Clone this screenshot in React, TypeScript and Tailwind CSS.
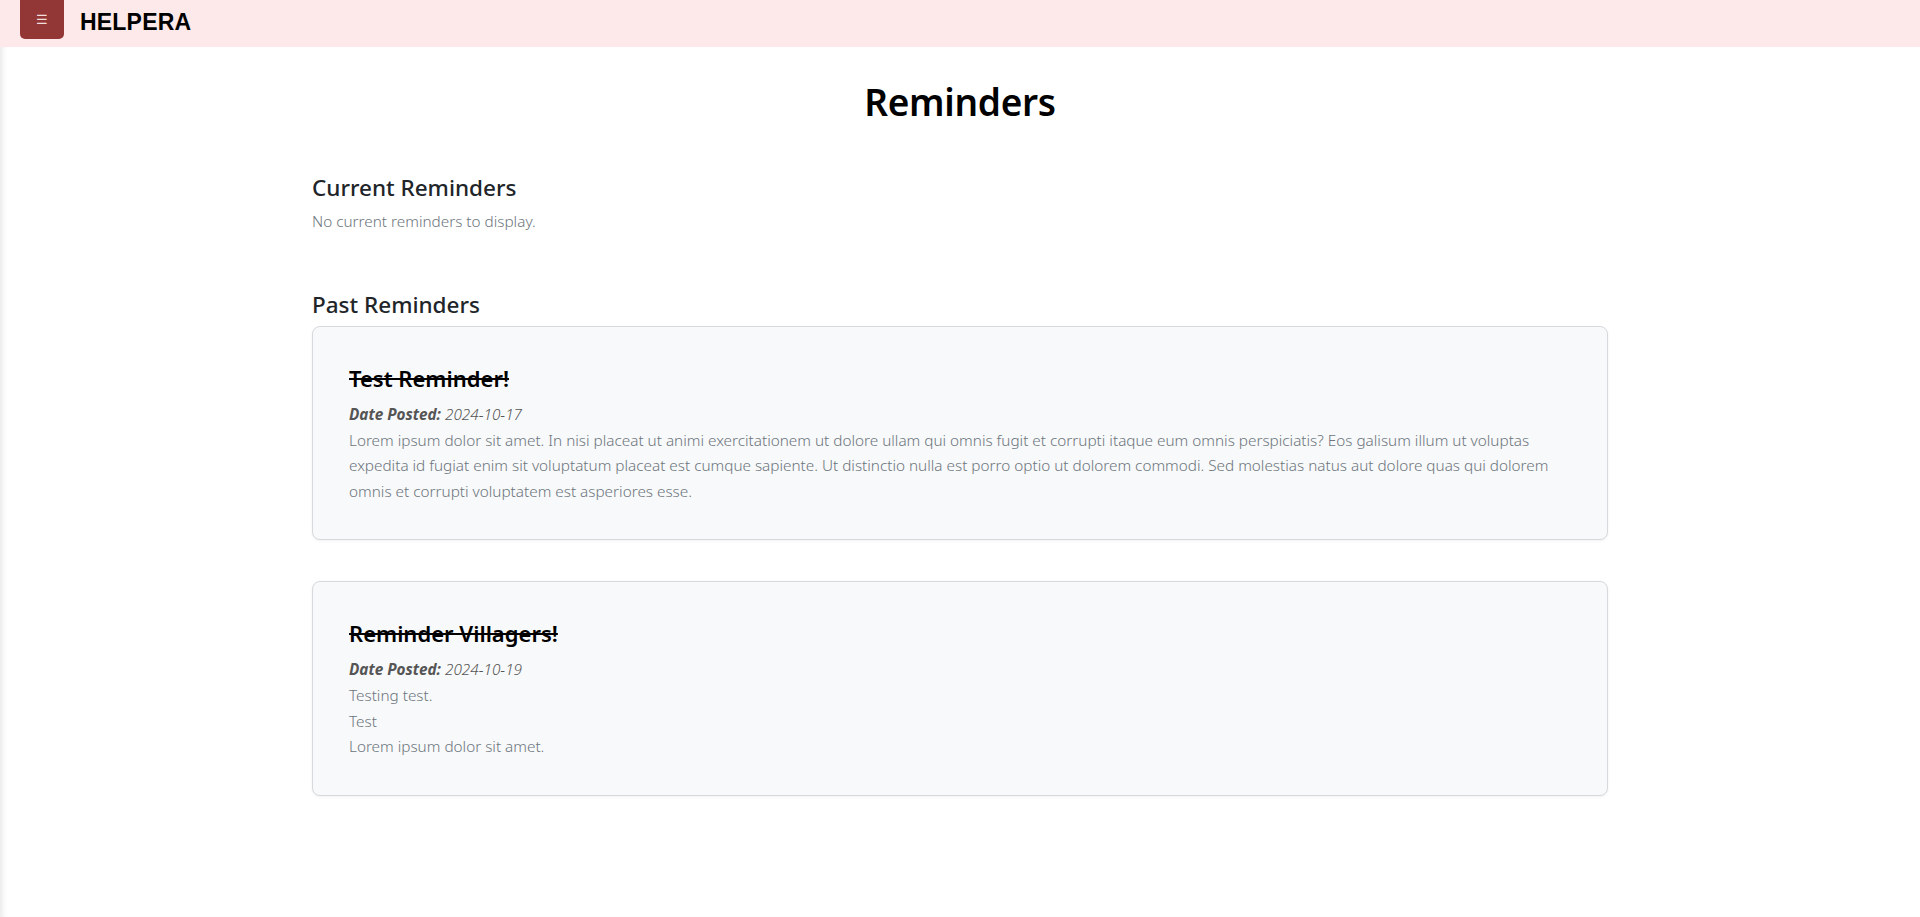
const reminders = [
  {
    title: "Test Reminder!",
    date: "2024-10-17",
    body: [
      "Lorem ipsum dolor sit amet. In nisi placeat ut animi exercitationem ut dolore ullam qui omnis fugit et corrupti itaque eum omnis perspiciatis? Eos galisum illum ut voluptas expedita id fugiat enim sit voluptatum placeat est cumque sapiente. Ut distinctio nulla est porro optio ut dolorem commodi. Sed molestias natus aut dolore quas qui dolorem omnis et corrupti voluptatem est asperiores esse.",
    ],
  },
  {
    title: "Reminder Villagers!",
    date: "2024-10-19",
    body: ["Testing test.", "Test", "Lorem ipsum dolor sit amet."],
  },
];

const App = () => {
  return (
    <div className="min-h-[917px] bg-white font-['Noto_Sans',sans-serif] text-[#212529]">
      {/* Header */}
      <header className="h-[47px] bg-[#fde9e9] flex items-start">
        <button className="ml-5 w-11 h-[39px] bg-[#923636] rounded-b-[5px] flex items-center justify-center text-[#f3dede] text-[13px] leading-none">
          ☰
        </button>
        <span className="ml-4 mt-[5px] font-['Liberation_Sans',Arial,sans-serif] font-bold text-[23px] text-black tracking-[0.2px]">
          HELPERA
        </span>
      </header>

      {/* Main */}
      <main className="min-h-[870px] shadow-[inset_7px_0_6px_-5px_rgba(0,0,0,0.10)]">
        <div className="w-[1296px] mx-auto">
          <h1 className="pt-[31px] text-[37px] leading-[48px] font-semibold text-center text-black tracking-[-0.3px]">
            Reminders
          </h1>

          <section className="mt-[47px]">
            <h4 className="text-[22.5px] leading-[29px] font-medium">Current Reminders</h4>
            <p className="mt-[7px] text-[15.3px] leading-6 font-light text-[#6c757d]">
              No current reminders to display.
            </p>
          </section>

          <section className="mt-[57px]">
            <h4 className="text-[22.5px] leading-[29px] font-medium">Past Reminders</h4>
            <div className="mt-[7px] flex flex-col gap-[41px]">
              {reminders.map((r, i) => (
                <div
                  key={i}
                  className="bg-[#f8f9fa] border border-[#d6d9dd] rounded-lg shadow-[0_1px_3px_rgba(0,0,0,0.06)] px-9 pt-[37px] pb-[35px]"
                >
                  <h4 className="text-[22px] leading-[29px] font-semibold text-black line-through decoration-[2px]">
                    {r.title}
                  </h4>
                  <p className="mt-[9px] text-[15.3px] leading-[25.6px] italic text-[#555]">
                    <strong className="font-bold">Date Posted:</strong>{" "}
                    <span className="font-light">{r.date}</span>
                  </p>
                  {r.body.map((line, j) => (
                    <p key={j} className="text-[15.3px] leading-[25.6px] font-light text-[#6c757d]">
                      {line}
                    </p>
                  ))}
                </div>
              ))}
            </div>
          </section>
        </div>
      </main>
    </div>
  );
};

export default App;
